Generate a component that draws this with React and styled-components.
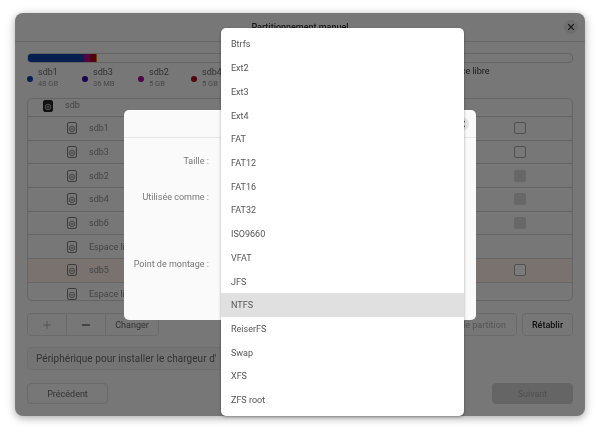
import React from 'react';
import styled, { createGlobalStyle } from 'styled-components';

const GlobalStyle = createGlobalStyle`
  html, body {
    margin: 0;
    background: #fff;
  }
  body {
    font-family: Roboto, "Noto Sans", sans-serif;
    color: #333;
  }
`;

const Page = styled.div`
  position: relative;
  width: 600px;
  height: 434px;
  padding: 13px 15px 18px;
  box-sizing: border-box;
  overflow: hidden;
  background: #fff;
  filter: blur(0.35px);
`;

const Window = styled.div`
  position: relative;
  height: 403px;
  box-sizing: border-box;
  display: flex;
  flex-direction: column;
  background: #eeeeee;
  border-radius: 8px;
  box-shadow: 0 2px 8px rgba(0, 0, 0, 0.35);
  overflow: hidden;
`;

const Scrim = styled.div`
  position: absolute;
  inset: 0;
  background: rgba(0, 0, 0, 0.5);
`;

const TitleBar = styled.div`
  position: relative;
  flex: none;
  height: 28px;
  display: flex;
  align-items: center;
  justify-content: center;
  border-bottom: 1px solid #d0d0d0;
  font-size: 9px;
  font-weight: 500;
`;

const CloseButton = styled.div`
  position: absolute;
  right: 7px;
  top: ${p => p.$top}px;
  width: 14px;
  height: 14px;
  border-radius: 50%;
  background: ${p => p.$bg};
  display: flex;
  align-items: center;
  justify-content: center;
`;

const Body = styled.div`
  flex: 1;
  display: flex;
  flex-direction: column;
  padding: 11px 12px 12px;
`;

const Bar = styled.div`
  flex: none;
  height: 8px;
  display: flex;
  border: 0.5px solid #c8c8c8;
  border-radius: 4px;
  overflow: hidden;
`;

const BarPart = styled.div`
  width: ${p => p.$w}px;
  background: ${p => p.$color};
`;

const Legend = styled.div`
  flex: none;
  height: 35px;
  padding-top: 3px;
  box-sizing: border-box;
  display: flex;
`;

const LegendItem = styled.div`
  width: ${p => p.$w}px;
  display: flex;
  align-items: center;
  gap: 5px;
  height: 23px;
`;

const Dot = styled.span`
  width: 6px;
  height: 6px;
  margin-top: 2px;
  border-radius: 50%;
  background: ${p => p.$color};
`;

const LegendText = styled.div`
  display: flex;
  flex-direction: column;
  font-size: 9px;
  line-height: 11px;
  color: #666;
  small {
    font-size: 7.5px;
    line-height: 11px;
    color: #909090;
  }
`;

const FreeLabel = styled.div`
  margin-left: 194px;
  font-size: 9px;
  line-height: 11px;
  white-space: nowrap;
  color: #333;
`;

const Tree = styled.div`
  flex: none;
  height: 203px;
  box-sizing: border-box;
  border: 1px solid #cacaca;
  border-radius: 5px;
  overflow: hidden;
`;

const DiskRow = styled.div`
  height: 17px;
  padding: 1px 0 0 15px;
  box-sizing: border-box;
  display: flex;
  align-items: flex-start;
  gap: 12px;
  font-size: 9px;
  line-height: 11px;
  color: #888;
`;

const Row = styled.div`
  height: 23.7px;
  box-sizing: border-box;
  border-top: 1px solid #cacaca;
  padding-left: 39px;
  display: flex;
  align-items: center;
  font-size: 9px;
  color: #888;
  background: ${p => (p.$selected ? '#f2e4df' : 'transparent')};
`;

const RowName = styled.span`
  flex: 1;
  margin-left: 12px;
`;

const Checkbox = styled.span`
  width: 10px;
  height: 10px;
  margin-right: 46px;
  border-radius: 2px;
  border: 1px solid ${p => (p.$disabled ? '#d0d0d0' : '#a0a0a0')};
  background: ${p => (p.$disabled ? '#d0d0d0' : p.$selected ? '#f6f6f6' : 'transparent')};
`;

const Toolbar = styled.div`
  flex: none;
  margin-top: 12px;
  height: 23px;
  display: flex;
`;

const ToolGroup = styled.div`
  display: flex;
  border: 1px solid #d4d4d4;
  border-radius: 4px;
  margin-left: ${p => p.$left || 0}px;
`;

const ToolButton = styled.div`
  width: ${p => p.$w}px;
  display: flex;
  align-items: center;
  justify-content: center;
  font-size: 9px;
  font-weight: ${p => (p.$bold ? 500 : 400)};
  white-space: nowrap;
  color: ${p => p.$color || '#666'};
  & + & {
    border-left: 1px solid #d4d4d4;
  }
`;

const Spacer = styled.div`
  flex: 1;
`;

const BootSelect = styled.div`
  flex: none;
  margin-top: 11px;
  width: 420px;
  height: 23px;
  padding-left: 8px;
  box-sizing: border-box;
  display: flex;
  align-items: center;
  border: 1px solid #dcdcdc;
  border-radius: 4px;
  background: #e8e8e8;
  font-size: 10px;
  letter-spacing: 0.05px;
  color: #666;
  white-space: nowrap;
  overflow: hidden;
`;

const Footer = styled.div`
  flex: none;
  margin-top: 13px;
  height: 21px;
  display: flex;
  justify-content: space-between;
`;

const FooterButton = styled.div`
  width: 81px;
  display: flex;
  align-items: center;
  justify-content: center;
  box-sizing: border-box;
  border: 1px solid ${p => (p.$primary ? '#cacaca' : '#d4d4d4')};
  border-radius: 4px;
  background: ${p => (p.$primary ? '#cacaca' : 'transparent')};
  font-size: 9px;
  color: ${p => (p.$primary ? '#a0a0a0' : '#666')};
`;

const Dialog = styled.div`
  position: absolute;
  left: 109px;
  top: 97px;
  width: 352px;
  height: 210px;
  background: #fafafa;
  border-radius: 5px;
  display: flex;
  flex-direction: column;
`;

const DialogHeader = styled.div`
  position: relative;
  flex: none;
  height: 27px;
  border-bottom: 1px solid #e6e6e6;
`;

const DialogForm = styled.div`
  display: flex;
  flex-direction: column;
  width: 85px;
  align-items: flex-end;
  font-size: 9px;
  line-height: 12px;
  color: #777;
`;

const FormLabel = styled.div`
  margin-top: ${p => p.$top}px;
  white-space: nowrap;
`;

const Menu = styled.div`
  position: absolute;
  left: 221px;
  top: 28px;
  width: 243px;
  height: 388px;
  padding-top: 4.5px;
  box-sizing: border-box;
  background: #fff;
  border-radius: 5px;
  box-shadow: 0 1px 3px rgba(0, 0, 0, 0.35);
`;

const MenuItem = styled.div`
  height: 23.73px;
  padding-left: 10px;
  display: flex;
  align-items: center;
  font-size: 9px;
  color: #555;
  background: ${p => (p.$active ? '#e0e0e0' : 'transparent')};
`;

function CloseIcon({ color }) {
  return (
    <svg width="8" height="8" viewBox="0 0 8 8">
      <path d="M1.2 1.2l5.6 5.6M6.8 1.2L1.2 6.8" stroke={color} strokeWidth="1.1" />
    </svg>
  );
}

function DiskIcon({ dark }) {
  const line = dark ? '#b8b8b8' : '#888';
  return (
    <svg width="10" height="12" viewBox="0 0 10 12">
      <rect x="0.5" y="0.5" width="9" height="11" rx="1.6" fill={dark ? '#222' : 'none'} stroke={dark ? '#222' : '#777'} />
      <circle cx="5" cy="7" r="2.8" fill="none" stroke={line} strokeWidth="0.9" />
      <circle cx="5" cy="7" r="1.1" fill="none" stroke={line} strokeWidth="0.8" />
    </svg>
  );
}

const legend = [
  { name: 'sdb1', size: '48 GB', color: '#0b3f9c', w: 55 },
  { name: 'sdb3', size: '36 MB', color: '#35089c', w: 56 },
  { name: 'sdb2', size: '5 GB', color: '#a00a8c', w: 53 },
  { name: 'sdb4', size: '5 GB', color: '#a5061e', w: 56 },
];

const rows = [
  { name: 'sdb1' },
  { name: 'sdb3' },
  { name: 'sdb2', disabled: true },
  { name: 'sdb4', disabled: true },
  { name: 'sdb6', disabled: true },
  { name: 'Espace libre', nobox: true },
  { name: 'sdb5', selected: true },
  { name: 'Espace libre', nobox: true },
];

const filesystems = ['Btrfs', 'Ext2', 'Ext3', 'Ext4', 'FAT', 'FAT12', 'FAT16', 'FAT32', 'ISO9660', 'VFAT', 'JFS', 'NTFS', 'ReiserFS', 'Swap', 'XFS', 'ZFS root'];

export default function App() {
  return (
    <Page>
      <GlobalStyle />
      <Window>
        <TitleBar>
          Partitionnement manuel
          <CloseButton $top={7} $bg="#dcdcdc"><CloseIcon color="#222" /></CloseButton>
        </TitleBar>
        <Body>
          <Bar>
            <BarPart $w={56} $color="#0b3f9c" />
            <BarPart $w={6} $color="#a00a8c" />
            <BarPart $w={6} $color="#a5061e" />
            <BarPart $w={1} $color="#e0701a" />
          </Bar>
          <Legend>
            {legend.map(l => (
              <LegendItem key={l.name} $w={l.w}>
                <Dot $color={l.color} />
                <LegendText>
                  {l.name}
                  <small>{l.size}</small>
                </LegendText>
              </LegendItem>
            ))}
            <FreeLabel>Espace libre</FreeLabel>
          </Legend>
          <Tree>
            <DiskRow>
              <DiskIcon dark />
              sdb
            </DiskRow>
            {rows.map((r, i) => (
              <Row key={i} $selected={r.selected}>
                <DiskIcon />
                <RowName>{r.name}</RowName>
                {!r.nobox && <Checkbox $disabled={r.disabled} $selected={r.selected} />}
              </Row>
            ))}
          </Tree>
          <Toolbar>
            <ToolGroup>
              <ToolButton $w={38}>
                <svg width="10" height="10" viewBox="0 0 10 10"><path d="M5 1v8M1 5h8" stroke="#aaa" strokeWidth="1" /></svg>
              </ToolButton>
              <ToolButton $w={38}>
                <svg width="10" height="10" viewBox="0 0 10 10"><path d="M1 5h8" stroke="#222" strokeWidth="1.2" /></svg>
              </ToolButton>
              <ToolButton $w={52}>Changer</ToolButton>
            </ToolGroup>
            <Spacer />
            <ToolGroup><ToolButton $w={125} $color="#a8a8a8">Nouvelle table de partition</ToolButton></ToolGroup>
            <ToolGroup $left={5}><ToolButton $w={49} $bold $color="#222">Rétablir</ToolButton></ToolGroup>
          </Toolbar>
          <BootSelect>Périphérique pour installer le chargeur d'</BootSelect>
          <Footer>
            <FooterButton>Précédent</FooterButton>
            <FooterButton $primary>Suivant</FooterButton>
          </Footer>
        </Body>
        <Scrim />
        <Dialog>
          <DialogHeader>
            <CloseButton $top={7} $bg="#e4e4e4"><CloseIcon color="#333" /></CloseButton>
          </DialogHeader>
          <DialogForm>
            <FormLabel $top={17}>Taille :</FormLabel>
            <FormLabel $top={24}>Utilisée comme :</FormLabel>
            <FormLabel $top={55}>Point de montage :</FormLabel>
          </DialogForm>
        </Dialog>
      </Window>
      <Menu>
        {filesystems.map(f => (
          <MenuItem key={f} $active={f === 'NTFS'}>{f}</MenuItem>
        ))}
      </Menu>
    </Page>
  );
}
